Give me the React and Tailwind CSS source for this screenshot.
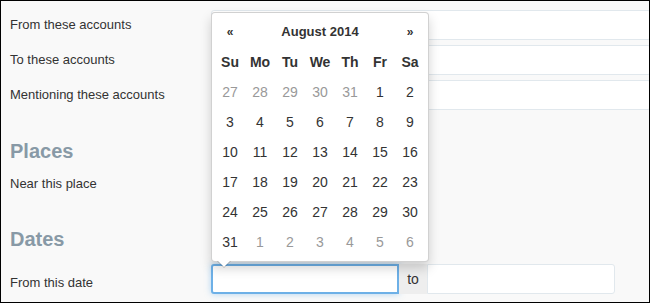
import React from "react";

const weeks = [
  [[27, 1], [28, 1], [29, 1], [30, 1], [31, 1], [1, 0], [2, 0]],
  [[3, 0], [4, 0], [5, 0], [6, 0], [7, 0], [8, 0], [9, 0]],
  [[10, 0], [11, 0], [12, 0], [13, 0], [14, 0], [15, 0], [16, 0]],
  [[17, 0], [18, 0], [19, 0], [20, 0], [21, 0], [22, 0], [23, 0]],
  [[24, 0], [25, 0], [26, 0], [27, 0], [28, 0], [29, 0], [30, 0]],
  [[31, 0], [1, 1], [2, 1], [3, 1], [4, 1], [5, 1], [6, 1]],
];

const dayNames = ["Su", "Mo", "Tu", "We", "Th", "Fr", "Sa"];

function Row({ label, inputWidth = "w-[440px]", className = "" }) {
  return (
    <div className={`flex h-[30px] items-center ${className}`}>
      <div className="w-[201px] shrink-0">{label}</div>
      <div className={`${inputWidth} h-[30px] shrink-0 rounded-[3px] border border-[#e1e8ed] bg-white`} />
    </div>
  );
}

function DatePicker() {
  return (
    <div className="absolute left-[210px] top-[11px] h-[250px] w-[218px] rounded-[4px] border border-[rgba(0,0,0,0.18)] bg-white px-[3px] py-[4px] shadow-[0_6px_12px_rgba(0,0,0,0.175)]">
      <div className="grid w-[210px] grid-cols-7">
        <div className="flex h-[30px] items-center justify-center text-[12px] font-bold">«</div>
        <div className="col-span-5 flex h-[30px] items-center justify-center font-bold">August 2014</div>
        <div className="flex h-[30px] items-center justify-center text-[12px] font-bold">»</div>
        {dayNames.map((d) => (
          <div key={d} className="flex h-[30px] items-center justify-center text-[14px] font-bold">
            {d}
          </div>
        ))}
        {weeks.flat().map(([n, other], i) => (
          <div
            key={i}
            className={`flex h-[30px] items-center justify-center text-[14px] ${other ? "text-[#999]" : "text-[#333]"}`}
          >
            {n}
          </div>
        ))}
      </div>
      {/* arrow pointing down at the input */}
      <span className="absolute bottom-[-7px] left-[5px] border-x-[7px] border-t-[7px] border-x-transparent border-t-[rgba(0,0,0,0.2)]" />
      <span className="absolute bottom-[-6px] left-[6px] border-x-[6px] border-t-[6px] border-x-transparent border-t-white" />
    </div>
  );
}

export default function App() {
  return (
    <div className="relative h-[303px] w-[650px] overflow-hidden border border-black bg-[#f9f9f9] font-['Liberation_Sans',Arial,sans-serif] text-[13px] text-[#333]">
      <div className="flex flex-col pl-[9px] pt-[9px]">
        <Row label="From these accounts" />
        <Row label="To these accounts" className="mt-[5px]" />
        <Row label="Mentioning these accounts" className="mt-[5px]" />

        <h2 className="mt-[29px] text-[20px] font-bold leading-[24px] text-[#8899a6]">Places</h2>
        <Row label="Near this place" inputWidth="w-[190px]" className="mt-[6px]" />

        <h2 className="mt-[28px] text-[20px] font-bold leading-[24px] text-[#8899a6]">Dates</h2>
        <div className="mt-[13px] flex h-[30px] items-center">
          <div className="w-[201px] shrink-0 pt-[8px]">From this date</div>
          <div className="h-[30px] w-[188px] shrink-0 rounded-l-[3px] border-2 border-[#6db0e7] bg-white shadow-[0_0_6px_rgba(102,175,233,0.5)]" />
          <div className="flex h-[30px] w-[28px] shrink-0 items-center justify-center bg-[#eee] text-[14px]">to</div>
          <div className="h-[30px] w-[188px] shrink-0 rounded-r-[3px] border border-[#e1e8ed] bg-white" />
        </div>
      </div>
      <DatePicker />
    </div>
  );
}
